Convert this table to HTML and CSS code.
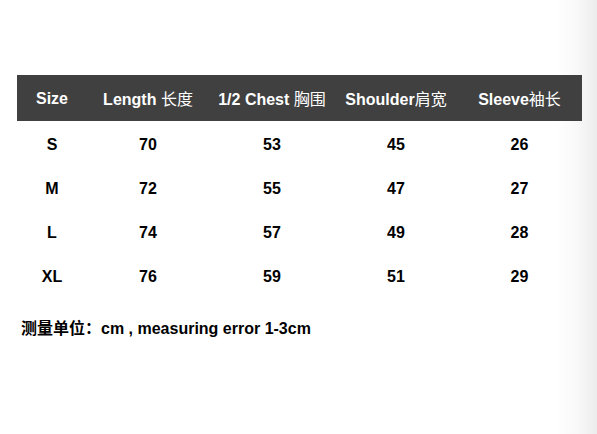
FILE: index.html
```html
<!DOCTYPE html>
<html>
<head>
<meta charset="utf-8">
<link rel="stylesheet" href="styles.css">
</head>
<body>
<div class="page">
  <div class="size-table">
    <div class="row head">
      <div class="cell">Size</div>
      <div class="cell">Length <span class="cjk">长度</span></div>
      <div class="cell">1/2 Chest <span class="cjk">胸围</span></div>
      <div class="cell">Shoulder<span class="cjk">肩宽</span></div>
      <div class="cell">Sleeve<span class="cjk">袖长</span></div>
    </div>
    <div class="row">
      <div class="cell">S</div><div class="cell">70</div><div class="cell">53</div><div class="cell">45</div><div class="cell">26</div>
    </div>
    <div class="row">
      <div class="cell">M</div><div class="cell">72</div><div class="cell">55</div><div class="cell">47</div><div class="cell">27</div>
    </div>
    <div class="row">
      <div class="cell">L</div><div class="cell">74</div><div class="cell">57</div><div class="cell">49</div><div class="cell">28</div>
    </div>
    <div class="row">
      <div class="cell">XL</div><div class="cell">76</div><div class="cell">59</div><div class="cell">51</div><div class="cell">29</div>
    </div>
  </div>
  <p class="note"><span class="note-cjk">测量单位：</span>cm , measuring error 1-3cm</p>
</div>
<div class="edge"></div>
</body>
</html>
```

FILE: styles.css
```css
html, body {
  margin: 0;
  padding: 0;
}
body {
  width: 597px;
  height: 434px;
  overflow: hidden;
  background: #fff;
  font-family: "Liberation Sans", Arial, "Noto Sans CJK SC", sans-serif;
  font-weight: bold;
  font-size: 16px;
  color: #000;
  position: relative;
}
.page {
  padding: 75px 0 0 17px;
}
.size-table {
  width: 565px;
}
.row {
  display: grid;
  grid-template-columns: 70px 122px 126px 122px 125px;
  height: 44px;
  align-items: center;
}
.row.head {
  height: 46px;
  background: #404040;
  color: #fff;
}
.cell {
  text-align: center;
  white-space: nowrap;
  line-height: 18px;
  padding-top: 2px;
}
.row:not(.head) .cell {
  padding-top: 4px;
}
.cjk {
  font-family: "Noto Sans CJK SC", sans-serif;
  font-weight: 400;
}
.note {
  margin: 21px 0 0 4px;
  line-height: 18px;
  white-space: nowrap;
}
.note-cjk {
  font-family: "Noto Sans CJK SC", sans-serif;
  font-weight: 700;
}
.edge {
  position: absolute;
  top: 0;
  right: 0;
  width: 42px;
  height: 100%;
  background: linear-gradient(to right, rgba(0,0,0,0) 0, rgba(0,0,0,0.025) 50%, rgba(0,0,0,0.075) 100%);
  z-index: -1;
}
```
